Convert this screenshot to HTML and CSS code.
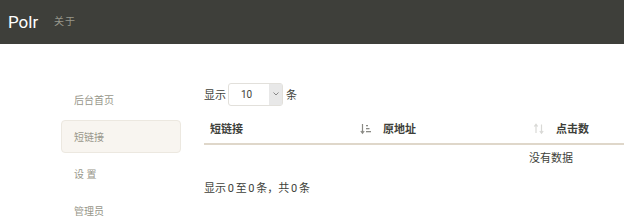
FILE: index.html
```html
<!DOCTYPE html>
<html lang="zh">
<head>
<meta charset="utf-8">
<title>Polr</title>
<link rel="stylesheet" href="styles.css">
</head>
<body>
<nav class="navbar">
  <a class="brand">Polr</a>
  <a class="nav-link">关于</a>
</nav>
<div class="page">
  <ul class="sidebar">
    <li class="item">后台首页</li>
    <li class="item active">短链接</li>
    <li class="item">设 置</li>
    <li class="item">管理员</li>
  </ul>
  <div class="main">
    <div class="length">
      <span>显示</span>
      <div class="select"><span class="val">10</span><span class="caret"><svg width="8" height="6" viewBox="0 0 8 6"><path d="M1.5 1.5 L4 4 L6.5 1.5" fill="none" stroke="#888" stroke-width="1"/></svg></span></div>
      <span>条</span>
    </div>
    <div class="table-wrap">
      <table class="tbl">
        <thead>
          <tr>
            <th class="c1"><span>短链接</span><svg class="sort" width="12" height="12" viewBox="0 0 12 12"><path d="M2.5 1v9M0.8 8l1.7 2.2L4.2 8" fill="none" stroke="#8a8a85" stroke-width="1.2"/><rect x="6" y="2" width="2" height="1.3" fill="#8a8a85"/><rect x="6" y="5" width="3.5" height="1.3" fill="#8a8a85"/><rect x="6" y="8" width="5" height="1.3" fill="#8a8a85"/></svg></th>
            <th class="c2"><span>原地址</span><svg class="sort" width="12" height="12" viewBox="0 0 12 12"><path d="M3 10V1.5M1.3 3.5L3 1.3L4.7 3.5M8.5 1.5V10M6.8 8L8.5 10.2L10.2 8" fill="none" stroke="#d9d9d6" stroke-width="1.2"/></svg></th>
            <th class="c3"><span>点击数</span></th>
            <th class="c4"></th>
          </tr>
        </thead>
        <tbody>
          <tr><td colspan="4" class="empty">没有数据</td></tr>
        </tbody>
      </table>
    </div>
    <div class="info">显示 0 至 0 条，共 0 条</div>
  </div>
</div>
</body>
</html>
```
FILE: styles.css
```css
* { box-sizing: border-box; }
html, body { margin: 0; padding: 0; overflow: hidden; }
body {
  font-family: Roboto, "Noto Sans CJK SC", sans-serif;
  color: #3e3f3a;
  background: #fff;
  width: 624px;
  height: 224px;
}
.navbar {
  height: 44px;
  background: #3e3f3a;
  display: flex;
  align-items: center;
  padding-left: 8px;
}
.brand {
  color: #fff;
  font-size: 17px;
  width: 46px;
  margin-top: -1px;
}
.nav-link {
  color: #98978b;
  font-size: 10px;
  letter-spacing: 1px;
  margin-top: -3px;
}
.page {
  display: flex;
  padding-top: 39px;
}
.sidebar {
  list-style: none;
  margin: 0 0 0 61px;
  padding: 0;
  width: 120px;
  display: flex;
  flex-direction: column;
  gap: 4px;
}
.item {
  height: 33px;
  line-height: 33px;
  padding-left: 12px;
  font-size: 10px;
  color: #98978b;
  border-radius: 4px;
  border: 1px solid transparent;
}
.item.active {
  background: #f8f5f0;
  border-color: #ece8e0;
}
.main {
  margin-left: 23px;
  flex: 1;
  min-width: 0;
}
.length {
  display: flex;
  align-items: center;
  gap: 3px;
  font-size: 11px;
  color: #3e3f3a;
  height: 24px;
  margin-top: -1px;
}
.select {
  display: flex;
  width: 55px;
  height: 23px;
  border: 1px solid #e2e0db;
  border-radius: 3px;
  margin-left: -1px;
}
.val {
  flex: 1;
  padding-left: 12px;
  font-size: 10px;
  line-height: 21px;
}
.caret {
  width: 13px;
  background: #e8e8e8;
  display: flex;
  align-items: center;
  justify-content: center;
}
.table-wrap {
  width: 430px;
  overflow: hidden;
  margin-top: 7px;
}
.tbl {
  border-collapse: collapse;
  width: 694px;
  font-size: 11px;
}
.tbl th {
  text-align: left;
  font-weight: bold;
  font-size: 11px;
  color: #3e3f3a;
  height: 31px;
  border-bottom: 2px solid #dfd7ca;
  padding: 0 6px;
  position: relative;
}
.tbl th .sort { position: absolute; right: 5px; top: 10px; }
.c1 { width: 173px; }
.c2 { width: 173px; }
.c3 { width: 100px; }
.empty {
  text-align: center;
  height: 25px;
  font-size: 11px;
  color: #3e3f3a;
  padding: 0;
}
.info {
  margin-top: 10px;
  font-size: 11px;
  color: #3e3f3a;
  word-spacing: -1px;
}
```
